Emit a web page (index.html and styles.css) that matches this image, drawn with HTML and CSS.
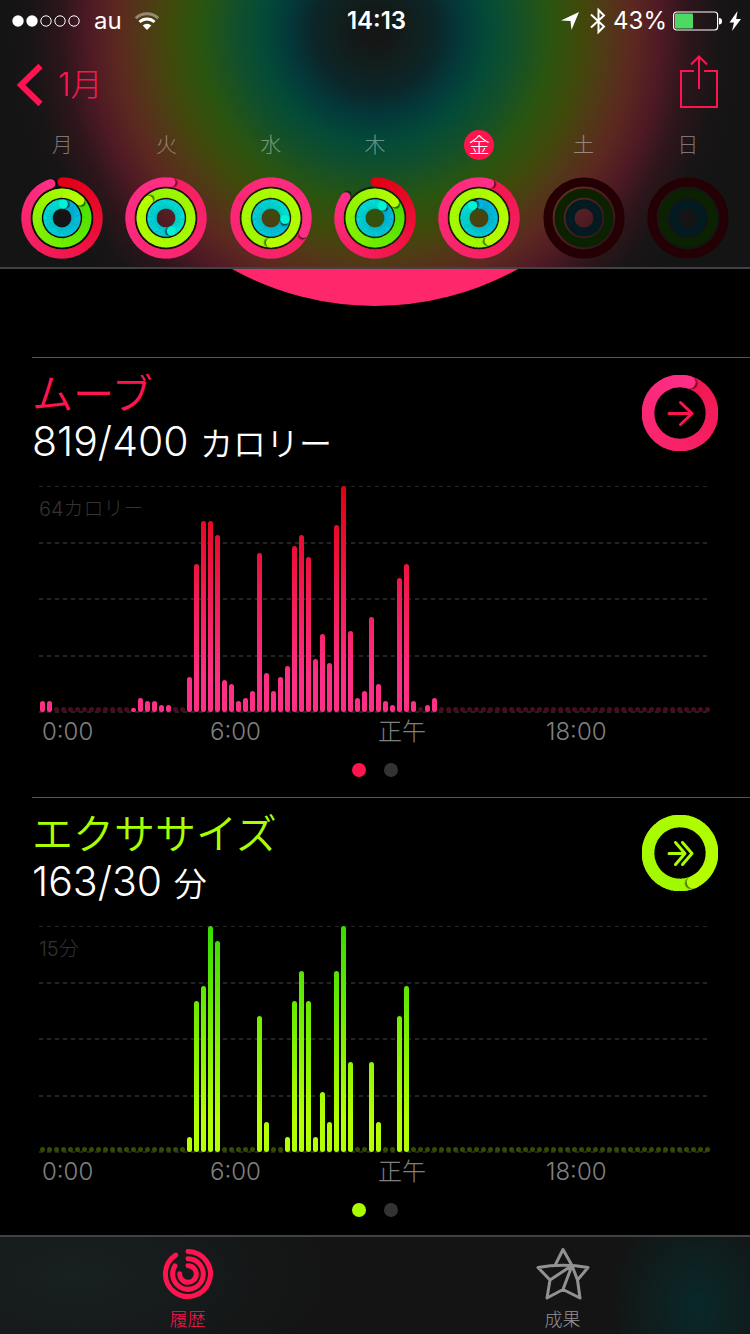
FILE: index.html
```html
<!DOCTYPE html>
<html lang="ja">
<head>
  <meta charset="UTF-8" />
  <meta name="viewport" content="width=device-width, initial-scale=1.0"/>
  <title>アクティビティ</title>
  <link rel="stylesheet" href="styles.css">
</head>
<body>

  <header class="top">
    <div class="status">
      <div class="status-left">
        <svg class="signal" width="70" height="14" viewBox="0 0 70 14">
          <g fill="#fff"><circle cx="6" cy="7" r="5.7"/><circle cx="20" cy="7" r="5.7"/></g>
          <g fill="none" stroke="#fff"><circle cx="34" cy="7" r="5.2"/><circle cx="48" cy="7" r="5.2"/><circle cx="62" cy="7" r="5.2"/></g>
        </svg>
        <span>au</span>
        <svg class="wifi" width="26" height="20" viewBox="0 0 26 20">
          <g fill="none" stroke="#fff" stroke-width="3">
            <path d="M1.800 7.200A16 16 0 0 1 24.200 7.200" opacity=".4"/>
            <path d="M5.500 11A10.800 10.800 0 0 1 20.500 11"/>
          </g>
          <path d="M13 19L8.700 14.600A6 6 0 0 1 17.300 14.600Z" fill="#fff"/>
        </svg>
      </div>
      <time class="clock">14:13</time>
      <div class="status-right">
        <svg width="20" height="20" viewBox="0 0 20 20"><path d="M19 1L11.500 19L10.500 10L1 9.500Z" fill="#fff"/></svg>
        <svg class="bt" width="16" height="28" viewBox="0 0 16 28"><path d="M1 7.500L14 19.500L8.500 25V3L14 8.500L1 20.500" fill="none" stroke="#fff" stroke-width="2"/></svg>
        <span>43%</span>
        <svg class="battery" width="50" height="20" viewBox="0 0 50 20">
          <rect x="0.600" y="1" width="44" height="18" rx="3" fill="none" stroke="#fff" stroke-width="1.200"/>
          <rect x="2" y="2.500" width="18" height="15" rx="1" fill="#4cd964"/>
          <path d="M46 7Q49 7 49 10.200Q49 13.500 46 13.500Z" fill="#fff"/>
        </svg>
        <svg width="12" height="20" viewBox="0 0 12 20"><path d="M8.500 0L0.500 11.500H5L3 20L12 8H7.200Z" fill="#fff"/></svg>
      </div>
    </div>

    <nav class="nav">
      <a class="back" href="#">
        <svg width="28" height="44" viewBox="0 0 28 44"><path d="M24.500 3L5 22L24.500 41" fill="none" stroke="#ff1450" stroke-width="6"/></svg>
        1月
      </a>
      <button class="share" aria-label="共有">
        <svg width="40" height="56" viewBox="0 0 40 56"><path d="M15 17H2V53H38V17H25M20 35V3M12 10.500L20 2.500L28 10.500" fill="none" stroke="#ff1450" stroke-width="2"/></svg>
      </button>
    </nav>

    <div class="week" id="week"></div>
  </header>

  <main>
    <div class="hero">
      <svg width="286" height="37" viewBox="0 0 286 37"><path d="M0 0A295 295 0 0 0 286 0Z" fill="#ff276c"/></svg>
    </div>

    <section class="card move">
      <div class="card-head">
        <div>
          <h2>ムーブ</h2>
          <p class="amount">819/400 <small>カロリー</small></p>
        </div>
        <button class="goal" aria-label="ムーブの詳細">
          <svg id="move-ring" width="76" height="76" viewBox="0 0 76 76">
            <path d="M27 38.500H50M38.500 27.500L50 38.500L38.500 49.500" fill="none" stroke="#ff1450" stroke-width="3" stroke-linecap="round" stroke-linejoin="round"/>
          </svg>
        </button>
      </div>
      <div class="chart" id="move-chart"><span class="max">64カロリー</span></div>
      <div class="hours"><span>0:00</span><span>6:00</span><span>正午</span><span>18:00</span></div>
      <div class="pages"><i class="on"></i><i></i></div>
    </section>

    <section class="card exercise">
      <div class="card-head">
        <div>
          <h2>エクササイズ</h2>
          <p class="amount">163/30 <small>分</small></p>
        </div>
        <button class="goal" aria-label="エクササイズの詳細">
          <svg id="exercise-ring" width="76" height="76" viewBox="0 0 76 76">
            <path d="M27 38.500H42M33.500 27.500L43 38.500L33.500 49.500M40.500 27.500L50 38.500L40.500 49.500" fill="none" stroke="#a8ff00" stroke-width="3" stroke-linecap="round" stroke-linejoin="round"/>
          </svg>
        </button>
      </div>
      <div class="chart" id="exercise-chart"><span class="max">15分</span></div>
      <div class="hours"><span>0:00</span><span>6:00</span><span>正午</span><span>18:00</span></div>
      <div class="pages"><i class="on"></i><i></i></div>
    </section>
  </main>

  <nav class="tabs">
    <a class="active" href="#">
      <svg width="54" height="54" viewBox="0 0 54 54">
        <g fill="none" stroke="#ff1450" stroke-width="5" stroke-linecap="round">
          <path d="M27 4.500A22.500 22.500 0 1 1 14.700 8.100"/>
          <path d="M27 11.700A15.300 15.300 0 1 1 14 18.900"/>
          <path d="M27 18.700A8.300 8.300 0 1 1 18.700 26.700"/>
        </g>
      </svg>
      履歴
    </a>
    <a href="#">
      <svg width="54" height="54" viewBox="0 0 54 54">
        <g fill="none" stroke="#929292" stroke-width="3" stroke-linejoin="round">
          <path d="M19 18.500L27 2.500L36 18.500"/>
          <path d="M14 33L2 20.500Q27 16 52 20.500L41.500 33L44 51L27 42.500L11 51L14 33L36 18.500L27 42.500M36 18.500L41.500 33"/>
        </g>
      </svg>
      成果
    </a>
  </nav>

  <script src="script.js"></script>
</body>
</html>
```

FILE: styles.css
```css
* {
  box-sizing: border-box;
}

body {
  margin: 0;
  min-height: 100vh;
  display: flex;
  flex-direction: column;
  background: #000;
  color: #fff;
  font-family: Inter, "Noto Sans CJK JP", sans-serif;
  font-weight: 300;
}

svg {
  display: block;
}

button {
  padding: 0;
  border: none;
  background: none;
  color: inherit;
  font: inherit;
  cursor: pointer;
}

a {
  text-decoration: none;
}

/* Header */
.top {
  position: sticky;
  top: 0;
  z-index: 1;
  border-bottom: 2px solid #424244;
  background: radial-gradient(circle at 50% 30px,
    #151616 12px, #10201f 40px, #0b2629 62px, #04383a 86px, #034a38 112px,
    #12502a 140px, #2a5510 175px, #3f4a0a 205px, #503a16 230px,
    #5c2820 258px, #4f1a24 285px, #2c151b 315px, #181516 345px, #141414 375px);
}

.status {
  display: grid;
  grid-template-columns: 1fr auto 1fr;
  align-items: center;
  height: 41px;
  padding: 0 9px 0 12px;
  font-size: 24px;
  font-weight: 400;
}

.status-left,
.status-right {
  display: flex;
  align-items: center;
}

.status-left {
  gap: 12px;
}

.status-right {
  justify-content: flex-end;
  gap: 6px;
}

.bt {
  margin: 0 1px 0 4px;
}

.clock {
  font-weight: 600;
}

.nav {
  display: flex;
  justify-content: space-between;
  align-items: center;
  height: 87px;
  padding: 0 31px 0 16px;
}

.back {
  display: flex;
  align-items: center;
  gap: 14px;
  color: #ff1450;
  font-size: 32px;
  line-height: 44px;
}

.share {
  margin-bottom: 6px;
}

.week {
  display: flex;
  padding: 0 10px 8px;
}

.day {
  flex: 1;
  display: flex;
  flex-direction: column;
  align-items: center;
  gap: 17px;
}

.day span {
  width: 30px;
  margin-top: 2px;
  border-radius: 50%;
  color: rgba(255, 255, 255, 0.42);
  font-size: 21px;
  line-height: 30px;
}

.day.today span {
  background: #ff1450;
  color: #fff;
}

/* Bottom edge of the big rings, scrolled under the header */
.hero {
  display: flex;
  justify-content: center;
  height: 88px;
}

/* Cards */
main {
  flex: 1;
}

.card {
  margin-left: 32px;
  padding: 13px 0 20px;
  border-top: 1px solid #555;
}

.card:last-child {
  padding-bottom: 18px;
}

.card-head {
  display: flex;
  justify-content: space-between;
  align-items: flex-start;
  padding-right: 32px;
}

h2 {
  margin: 0;
  font-size: 41px;
  font-weight: 350;
  line-height: 46px;
}

.move h2 {
  color: #ff1450;
}

.exercise h2 {
  color: #a8ff00;
}

.amount {
  margin: 0;
  font-size: 41px;
  line-height: 48px;
}

.amount small {
  font-size: 33px;
  font-weight: 350;
  line-height: 1;
}

.goal {
  margin-top: 4px;
}

.chart {
  display: flex;
  align-items: flex-end;
  position: relative;
  height: 226px;
  margin: 21px 39px 0 7px;
}

.chart .line {
  position: absolute;
  left: 0;
  right: 4px;
  height: 2px;
  background: repeating-linear-gradient(to right, #242424 0 4px, transparent 4px 8px);
}

.chart .line:first-of-type {
  height: 1px;
}

.max {
  position: absolute;
  top: 8px;
  left: 0;
  color: #333;
  font-size: 20px;
  line-height: 30px;
}

/* The colour depends on the height in the chart, not on the bar */
.bar {
  position: relative;
  flex: 1;
  margin: 0 1px;
  border-radius: 3px;
  background-position: bottom;
  background-size: 100% 226px;
}

.move .bar {
  background-image: linear-gradient(#e2000f, #ff2f87 85%);
}

.exercise .bar {
  background-image: linear-gradient(#35dc00, #b4ff00 85%);
}

.move .bar.empty {
  background: #4e0a1f;
}

.exercise .bar.empty {
  background: #334d00;
}

.hours {
  display: grid;
  grid-template-columns: repeat(4, 1fr);
  margin: 0 36px 0 10px;
  color: #808080;
  font-size: 24px;
  line-height: 40px;
}

.pages {
  display: flex;
  justify-content: center;
  gap: 18px;
  margin: 11px 0 0 -32px;
}

.pages i {
  width: 14px;
  height: 14px;
  border-radius: 50%;
  background: #333;
}

.move .on {
  background: #ff1450;
}

.exercise .on {
  background: #a8ff00;
}

/* Tab bar */
.tabs {
  position: sticky;
  bottom: 0;
  display: flex;
  height: 99px;
  border-top: 2px solid #424244;
  background:
    radial-gradient(90px 110px at 93% 70%, #092829, transparent),
    radial-gradient(260px 120px at 10% 40%, #182020, transparent),
    #141414;
}

.tabs a {
  flex: 1;
  display: flex;
  flex-direction: column;
  align-items: center;
  gap: 5px;
  padding-top: 10px;
  color: #929292;
  font-size: 18px;
  line-height: 28px;
}

.tabs svg {
  flex-shrink: 0;
}

.tabs .active {
  color: #ff1450;
}
```

FILE: script.js
```js
const SVG = "http://www.w3.org/2000/svg";

const colors = {
  move: [[226, 0, 20], [255, 47, 135]],
  exercise: [[58, 222, 0], [182, 255, 0]],
  stand: [[0, 180, 226], [0, 244, 210]]
};

function add(parent, tag, attrs) {
  const el = document.createElementNS(SVG, tag);
  for (const key in attrs) el.setAttribute(key, attrs[key]);
  parent.appendChild(el);
  return el;
}

function mix(pair, t) {
  return "rgb(" + pair[0].map((c, i) => Math.round(c + (pair[1][i] - c) * t)).join(",") + ")";
}

function point(c, r, turn) {
  const a = turn * 2 * Math.PI;
  return [c + r * Math.sin(a), c - r * Math.cos(a)];
}

// Only the last lap is visible, so earlier laps just shift the start colour
function drawRing(svg, c, r, width, pair, progress) {
  const from = Math.max(0, progress - 1);
  const span = progress - from;
  const steps = 120;

  if (progress < 1) {
    const [x, y] = point(c, r, 0);
    add(svg, "circle", { cx: x, cy: y, r: width / 2, fill: mix(pair, 0) });
  }

  for (let i = 0; i < steps; i++) {
    // shadow goes under the tip of the ring
    if (i === steps - 10) {
      const [sx, sy] = point(c, r, progress + 0.4 / r);
      for (let k = 0; k < 4; k++) {
        add(svg, "circle", { cx: sx, cy: sy, r: width / 2 - 1.5 + k * 0.5, fill: "#000", opacity: 0.18 });
      }
    }
    const a = from + span * i / steps;
    const b = Math.min(progress, a + span / steps + 0.004);
    const [x1, y1] = point(c, r, a);
    const [x2, y2] = point(c, r, b);
    add(svg, "path", {
      d: `M${x1} ${y1}A${r} ${r} 0 0 1 ${x2} ${y2}`,
      fill: "none",
      stroke: mix(pair, pair === colors.stand ? 0.75 * a / progress : a / progress),
      "stroke-width": width
    });
  }

  const [ex, ey] = point(c, r, progress);
  add(svg, "circle", { cx: ex, cy: ey, r: width / 2, fill: mix(pair, 1) });
}

// Week
const days = [
  { name: "月", rings: [0.95, 1.128, 1.015] },
  { name: "火", rings: [3.022, 3.875, 2.437] },
  { name: "水", rings: [3.32, 5.503, 1.267] },
  { name: "木", rings: [0.85, 1.143, 1.087] },
  { name: "金", rings: [2.048, 5.433, 0.926], today: true },
  { name: "土" },
  { name: "日" }
];

const radii = [36, 24.8, 14];
const emptyColors = ["#240004", "#0a2200", "#031b20"];

days.forEach(day => {
  const btn = document.createElement("button");
  btn.className = day.today ? "day today" : "day";
  const label = document.createElement("span");
  label.textContent = day.name;
  btn.appendChild(label);
  const svg = add(btn, "svg", { width: 82, height: 82, viewBox: "0 0 82 82" });
  if (day.rings) {
    add(svg, "circle", { cx: 41, cy: 41, r: 20.5, fill: "none", stroke: "#000", "stroke-width": 22, opacity: 0.6 });
  }
  radii.forEach((r, i) => {
    if (day.rings) {
      drawRing(svg, 41, r, 9.2, Object.values(colors)[i], day.rings[i]);
    } else {
      add(svg, "circle", { cx: 41, cy: 41, r: r, fill: "none", stroke: emptyColors[i], "stroke-width": 9.2 });
    }
  });
  document.getElementById("week").appendChild(btn);
});

// Goal rings
drawRing(document.getElementById("move-ring"), 38, 32, 12.6, colors.move, 819 / 400);
drawRing(document.getElementById("exercise-ring"), 38, 32, 12.6, colors.exercise, 163 / 30);

// Charts, one bar per 15 minutes
const move = [
  11, 11, 0, 0, 0, 0, 0, 0, 0, 0, 0, 0, 0, 4, 14, 11, 11, 7, 7, 0, 0, 35, 148, 191,
  191, 177, 32, 28, 11, 14, 21, 159, 39, 21, 35, 46, 166, 177, 155, 53, 78, 49, 187, 226, 81, 14, 21, 95,
  28, 11, 7, 134, 148, 11, 0, 7, 14
];
const exercise = [
  0, 0, 0, 0, 0, 0, 0, 0, 0, 0, 0, 0, 0, 0, 0, 0, 0, 0, 0, 0, 0, 15, 151, 166,
  226, 211, 0, 0, 0, 0, 0, 136, 30, 0, 0, 15, 151, 181, 151, 15, 60, 30, 181, 226, 90, 0, 0, 90,
  30, 0, 0, 136, 166
];

function drawChart(id, data) {
  const chart = document.getElementById(id);
  for (let i = 0; i < 5; i++) {
    const line = document.createElement("div");
    line.className = "line";
    line.style.top = [0, 56, 112, 169, 225][i] + "px";
    chart.appendChild(line);
  }
  for (let i = 0; i < 96; i++) {
    const bar = document.createElement("div");
    const value = data[i] || 0;
    bar.className = value ? "bar" : "bar empty";
    bar.style.height = (value || 5) + "px";
    chart.appendChild(bar);
  }
}

drawChart("move-chart", move);
drawChart("exercise-chart", exercise);
```
